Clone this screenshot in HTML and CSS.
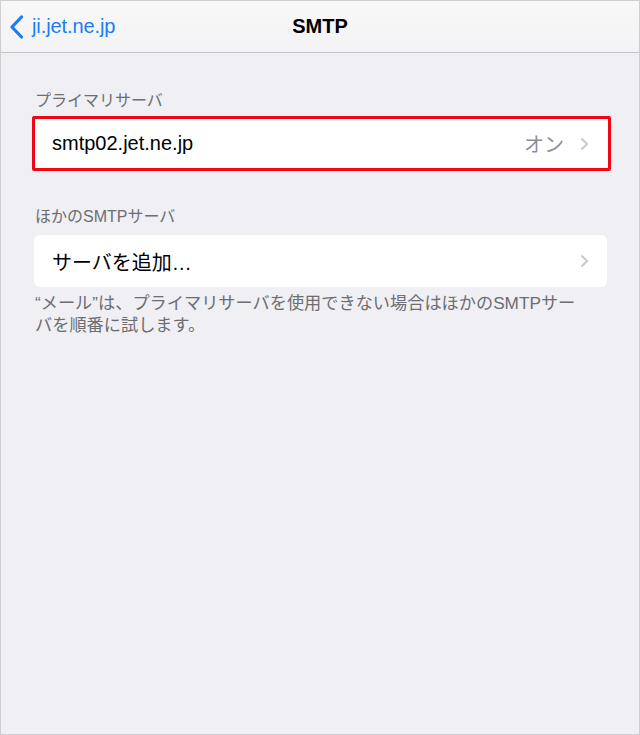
FILE: index.html
```html
<!DOCTYPE html>
<html lang="ja">
<head>
<meta charset="utf-8">
<title>SMTP</title>
<link rel="stylesheet" href="styles.css">
</head>
<body>
<div class="screen">
  <header class="navbar">
    <a class="back">
      <svg class="back-icon" width="15" height="24" viewBox="0 0 15 24"><path d="M12.5 2 L3 12 L12.5 22" fill="none" stroke="#1a7cf5" stroke-width="3.2" stroke-linecap="round" stroke-linejoin="round"/></svg>
      <span class="back-label">ji.jet.ne.jp</span>
    </a>
    <h1 class="title">SMTP</h1>
  </header>

  <main class="content">
    <section class="group group-primary">
      <div class="group-header">プライマリサーバ</div>
      <div class="cell cell-highlight">
        <span class="cell-label">smtp02.jet.ne.jp</span>
        <span class="cell-value">オン</span>
        <svg class="chevron" width="9" height="14" viewBox="0 0 9 14"><path d="M1.5 1.5 L7 7 L1.5 12.5" fill="none" stroke="#c7c7cc" stroke-width="2"/></svg>
      </div>
    </section>

    <section class="group group-other">
      <div class="group-header">ほかのSMTPサーバ</div>
      <div class="cell cell-plain">
        <span class="cell-label">サーバを追加…</span>
        <svg class="chevron" width="9" height="14" viewBox="0 0 9 14"><path d="M1.5 1.5 L7 7 L1.5 12.5" fill="none" stroke="#c7c7cc" stroke-width="2"/></svg>
      </div>
      <p class="group-footer">“メール”は、プライマリサーバを使用できない場合はほかのSMTPサーバを順番に試します。</p>
    </section>
  </main>
</div>
</body>
</html>
```

FILE: styles.css
```css
* { box-sizing: border-box; }

html, body {
  margin: 0;
  padding: 0;
}

body {
  width: 640px;
  height: 735px;
  font-family: "Liberation Sans", "Noto Sans CJK JP", sans-serif;
  background: #efeff4;
}

.screen {
  width: 640px;
  height: 735px;
  border: 1px solid #cfcfd2;
  background: #efeff4;
  display: flex;
  flex-direction: column;
  overflow: hidden;
}

.navbar {
  position: relative;
  height: 52px;
  flex: none;
  background: linear-gradient(#f8f8f9, #f3f3f5);
  border-bottom: 1px solid #c4c4c8;
  display: flex;
  align-items: center;
  justify-content: center;
}

.back {
  position: absolute;
  left: 8px;
  top: 0;
  height: 51px;
  display: flex;
  align-items: center;
  gap: 8px;
  color: #1a7cf5;
}

.back-icon { display: block; margin-top: 1px; }

.back-label {
  font-size: 20px;
  letter-spacing: -0.1px;
}

.title {
  margin: 0;
  font-size: 20px;
  font-weight: bold;
  color: #000;
}

.content {
  display: flex;
  flex-direction: column;
}

.group-header {
  font-size: 16px;
  line-height: 20px;
  color: #6d6d72;
  padding-left: 34px;
}

.group-primary { padding-top: 38px; }
.group-primary .group-header { margin-bottom: 5px; }

.group-other { padding-top: 36px; }
.group-other .group-header { margin-bottom: 8px; }

.cell {
  display: flex;
  align-items: center;
  background: #fff;
  font-size: 20px;
  color: #000;
}

.cell-highlight {
  margin-left: 31px;
  width: 579px;
  height: 55px;
  border: 3px solid #f00714;
  border-radius: 2px;
  padding: 0 19px 0 17px;
}

.cell-plain {
  margin-left: 33px;
  width: 573px;
  height: 52px;
  border-radius: 6px;
  padding: 0 18px 0 18px;
}

.cell-label { flex: 1; }

.cell-value {
  color: #8e8e93;
  margin-right: 16px;
}

.chevron { display: block; }

.group-footer {
  margin: 5px 0 0;
  padding: 0 54px 0 34px;
  font-size: 17.2px;
  line-height: 22px;
  color: #6d6d72;
}
```
